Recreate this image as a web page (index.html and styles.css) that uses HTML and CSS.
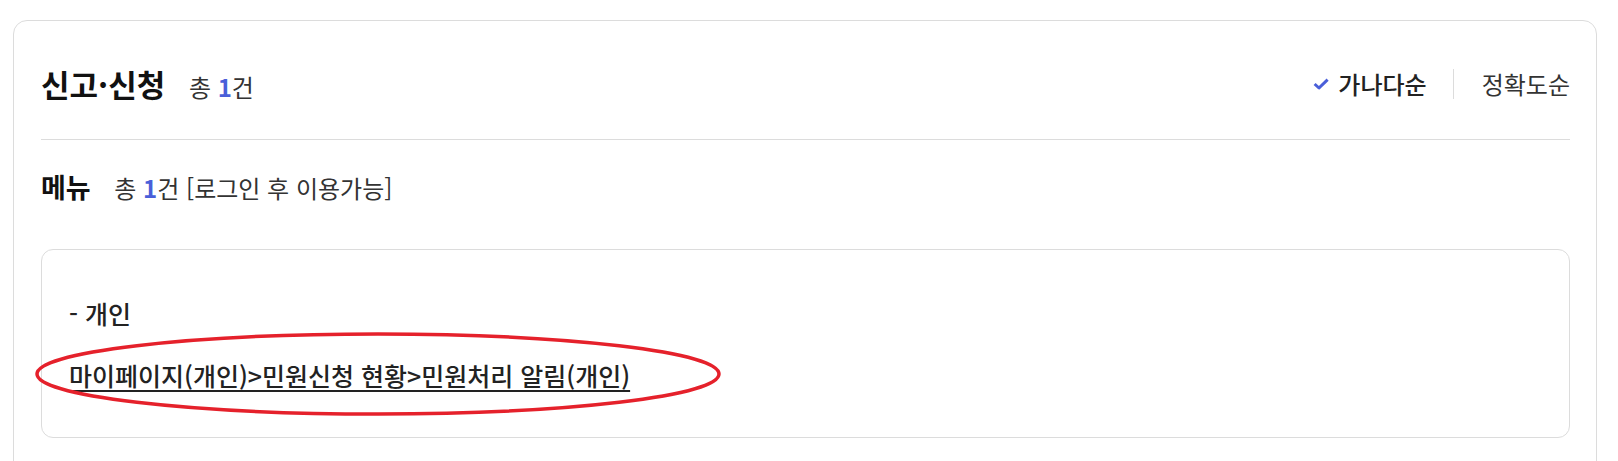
FILE: index.html
```html
<!DOCTYPE html>
<html lang="ko">
<head>
  <meta charset="UTF-8">
  <title>통합검색 - 신고·신청</title>
  <link rel="stylesheet" href="styles.css">
</head>
<body>
  <div class="result-card">
    <div class="result-head">
      <h2 class="result-title">신고·신청 <span class="count">총 <em>1</em>건</span></h2>
      <ul class="sort">
        <li class="active">
          <svg class="check" width="16" height="12" viewBox="0 0 16 12"><path d="M1.6 6 L6 10 L14.6 1.6" fill="none" stroke="#4a5fd9" stroke-width="3" stroke-linejoin="round"/></svg>
          가나다순
        </li>
        <li>정확도순</li>
      </ul>
    </div>

    <h3 class="section-title">메뉴 <span class="count">총 <em>1</em>건 [로그인 후 이용가능]</span></h3>

    <div class="menu-box">
      <p class="menu-group">- 개인</p>
      <p class="menu-path">
        <a href="#">마이페이지(개인)&gt;민원신청 현황&gt;민원처리 알림(개인)</a>
        <svg class="mark" width="700" height="92" viewBox="0 0 700 92"><ellipse cx="350" cy="46" rx="341" ry="40" fill="none" stroke="#e5212b" stroke-width="3.5"/></svg>
      </p>
    </div>
  </div>
</body>
</html>
```

FILE: styles.css
```css
body {
  margin: 0;
  padding: 20px 21px 0 13px;
  background: #fff;
  font-family: "Noto Sans CJK KR", "Noto Sans", sans-serif;
  color: #222;
}

.result-card {
  border: 1px solid #dcdcdc;
  border-radius: 14px;
  padding: 0 26px 60px 27px;
}

.result-head {
  display: flex;
  align-items: center;
  justify-content: space-between;
  padding: 43px 0 32px;
  border-bottom: 1px solid #dcdcdc;
}

.result-title {
  margin: 0;
  font-size: 31px;
  font-weight: 700;
  line-height: 40px;
  color: #111;
}

.count {
  margin-left: 15px;
  font-size: 24px;
  font-weight: 400;
  color: #333;
}

.count em {
  font-style: normal;
  font-weight: 700;
  color: #4a5fd9;
}

.sort {
  display: flex;
  align-items: center;
  margin: 0 0 4px;
  padding: 0;
  list-style: none;
  font-size: 24px;
  line-height: 30px;
  color: #333;
}

.sort li {
  display: flex;
  align-items: center;
}

.sort li + li {
  margin-left: 26px;
  padding-left: 28px;
  border-left: 1px solid #dcdcdc;
}

.sort .active {
  font-weight: 500;
  color: #222;
}

.check {
  margin-right: 9px;
}

.section-title {
  margin: 30px 0 0;
  font-size: 27px;
  font-weight: 700;
  line-height: 34px;
  color: #111;
}

.section-title .count {
  margin-left: 16px;
}

.menu-box {
  margin-top: 44px;
  border: 1px solid #dcdcdc;
  border-radius: 12px;
  padding: 46px 27px 45px;
}

.menu-box p {
  margin: 0;
  font-size: 25px;
  font-weight: 500;
  line-height: 34px;
  color: #222;
}

.menu-box .menu-path {
  position: relative;
  margin-top: 28px;
}

.menu-path a {
  color: #222;
  text-decoration: underline;
  text-decoration-thickness: 2px;
  text-underline-offset: 4px;
}

.mark {
  position: absolute;
  left: -41px;
  top: -30px;
  pointer-events: none;
}
```
